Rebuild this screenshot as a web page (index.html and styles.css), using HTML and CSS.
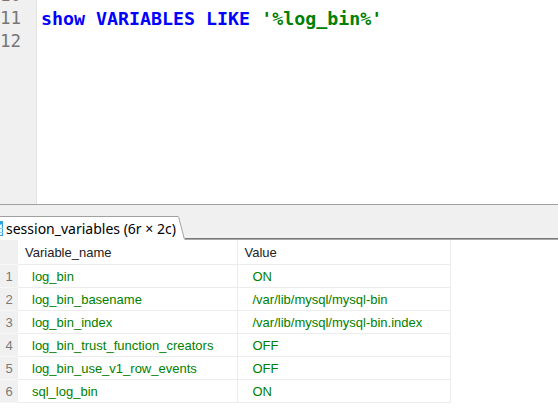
FILE: index.html
```html
<!DOCTYPE html>
<html>
<head>
<meta charset="utf-8">
<link rel="stylesheet" href="styles.css">
</head>
<body>
<div class="editor">
  <div class="gutter">
    <div class="ln">10</div>
    <div class="ln">11</div>
    <div class="ln">12</div>
  </div>
  <div class="code">
    <div class="cl">&nbsp;</div>
    <div class="cl"><span class="kw">show VARIABLES LIKE</span> <span class="str">'%log_bin%'</span></div>
    <div class="cl">&nbsp;</div>
  </div>
</div>
<div class="tabbar">
  <div class="tab">
    <svg class="ticon" width="14" height="15" viewBox="0 0 14 15">
      <rect x="0" y="0" width="14" height="15" fill="#ffffff"/>
      <rect x="0.5" y="0.5" width="13" height="14" fill="#e6f4fb" stroke="#3aa0d8"/>
      <rect x="0.5" y="0.5" width="13" height="3" fill="#27a4dd"/>
      <line x1="0" y1="7.5" x2="14" y2="7.5" stroke="#8cc8ea"/>
      <line x1="0" y1="11.5" x2="14" y2="11.5" stroke="#8cc8ea"/>
    </svg>
    <span class="tlabel">session_variables (6r × 2c)</span>
  </div>
  <svg class="tabedge" width="7" height="24" viewBox="0 0 7 24">
    <polygon points="0,0 1,0 7,24 0,24" fill="#ffffff"/>
    <line x1="0.5" y1="0.5" x2="6.5" y2="23.5" stroke="#a0a0a0"/>
  </svg>
  <div class="tabrest"></div>
</div>
<table class="grid">
  <colgroup>
    <col class="c-rn">
    <col class="c-name">
    <col class="c-val">
  </colgroup>
  <thead>
    <tr><th class="rn"></th><th class="name">Variable_name</th><th class="val">Value</th></tr>
  </thead>
  <tbody>
    <tr><td class="rn">1</td><td class="name">log_bin</td><td class="val">ON</td></tr>
    <tr><td class="rn">2</td><td class="name">log_bin_basename</td><td class="val">/var/lib/mysql/mysql-bin</td></tr>
    <tr><td class="rn">3</td><td class="name">log_bin_index</td><td class="val">/var/lib/mysql/mysql-bin.index</td></tr>
    <tr><td class="rn">4</td><td class="name">log_bin_trust_function_creators</td><td class="val">OFF</td></tr>
    <tr><td class="rn">5</td><td class="name">log_bin_use_v1_row_events</td><td class="val">OFF</td></tr>
    <tr><td class="rn">6</td><td class="name">sql_log_bin</td><td class="val">ON</td></tr>
  </tbody>
</table>
</body>
</html>
```

FILE: styles.css
```css
html, body {
  margin: 0;
  padding: 0;
  background: #ffffff;
}
body {
  width: 558px;
  height: 413px;
  overflow: hidden;
  font-family: "Liberation Sans", sans-serif;
}
.editor {
  display: flex;
  height: 204px;
  overflow: hidden;
  border-bottom: 1px solid #a0a0a0;
}
.gutter {
  width: 36px;
  background: #f0f0f0;
  border-right: 1px solid #e2e2e2;
}
.ln, .cl {
  height: 23px;
  line-height: 23px;
  font-family: "DejaVu Sans Mono", "Liberation Mono", monospace;
  font-size: 18.3px;
  white-space: pre;
}
.gutter .ln:first-child, .code .cl:first-child {
  margin-top: -16px;
}
.ln {
  color: #777777;
  font-size: 17.5px;
}
.code {
  flex: 1;
  padding-left: 4px;
}
.cl {
  font-weight: bold;
}
.kw { color: #0000ff; }
.str { color: #008000; }

.tabbar {
  display: flex;
  align-items: flex-end;
  height: 35px;
  background: #f0f0f0;
}
.tab {
  display: flex;
  align-items: center;
  height: 23px;
  background: #ffffff;
  border-top: 1px solid #a0a0a0;
  margin-left: -11px;
  padding-right: 2px;
}
.ticon {
  display: block;
  margin-right: 3px;
}
.tlabel {
  font-family: "Noto Sans", "DejaVu Sans", sans-serif;
  font-size: 14px;
  color: #000000;
  line-height: 22px;
  white-space: nowrap;
}
.tabedge {
  display: block;
}
.tabrest {
  flex: 1;
  height: 0;
  border-top: 1px solid #7a7a7a;
  border-bottom: 1px solid #a8a8a8;
}

.grid {
  border-collapse: collapse;
  table-layout: fixed;
  width: 450px;
  font-family: "Liberation Sans", sans-serif;
  font-size: 13px;
}
.c-rn { width: 18px; }
.c-name { width: 219px; }
.c-val { width: 213px; }
.grid th, .grid td {
  height: 22px;
  padding: 0;
  white-space: nowrap;
  overflow: hidden;
  text-align: left;
  font-weight: normal;
  border-bottom: 1px solid #ececec;
  border-right: 1px solid #ececec;
}
.grid th {
  height: 24px;
  color: #222222;
}
.grid .rn {
  background: #f0f0f0;
  color: #7a7a7a;
  text-align: center;
  border-bottom: 1px solid #f7f7f7;
  border-right: none;
}
.grid th.name { padding-left: 7px; }
.grid th.val { padding-left: 7px; }
.grid td.name { padding-left: 14px; color: #008000; }
.grid td.val { padding-left: 15px; color: #008000; }
```
